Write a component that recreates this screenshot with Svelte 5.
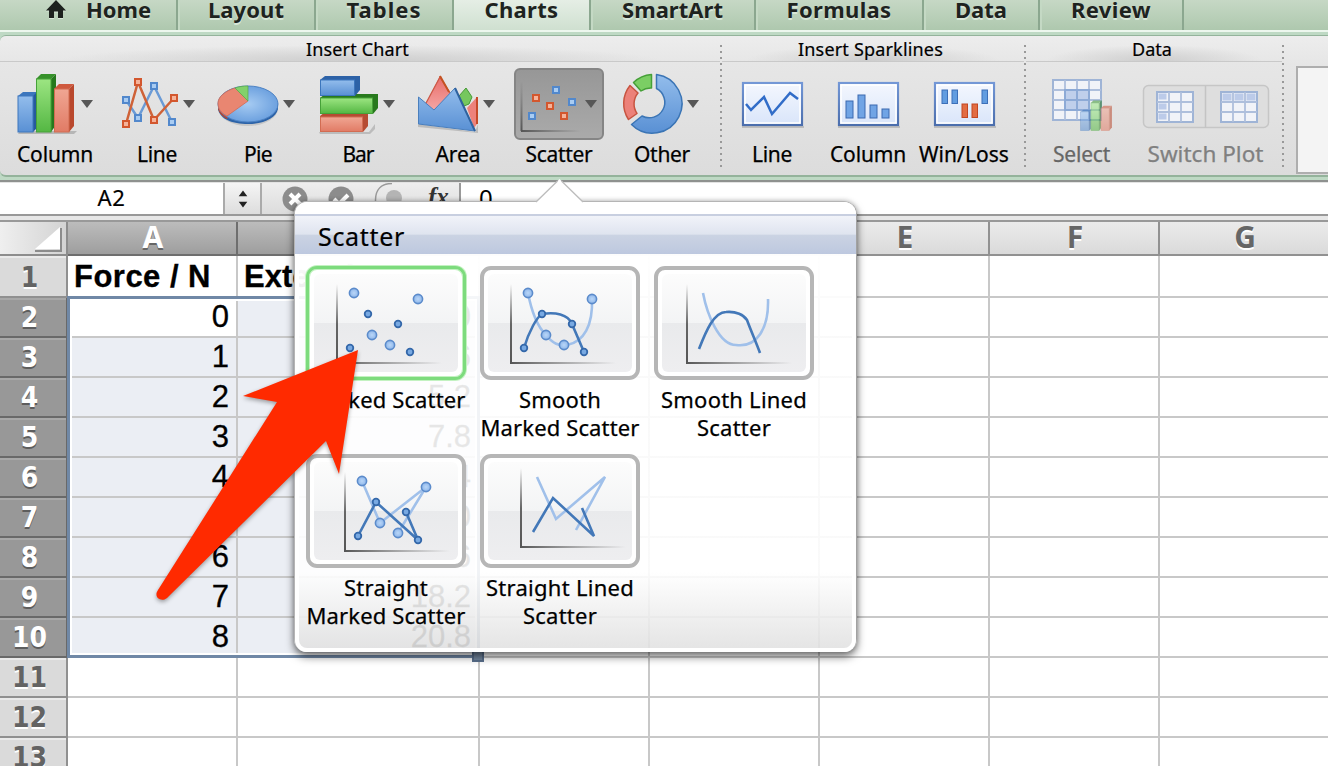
<script>
  function fit(node, width) {
    const natural = node.getBoundingClientRect().width;
    const count = node.textContent.length;
    node.style.letterSpacing = `${(width - natural) / count}px`;
  }

  const tabs = [
    { name: 'Home', w: 178, text: 65, home: true },
    { name: 'Layout', w: 138, text: 76 },
    { name: 'Tables', w: 138, text: 75 },
    { name: 'Charts', w: 137, text: 74, active: true },
    { name: 'SmartArt', w: 165, text: 101 },
    { name: 'Formulas', w: 168, text: 105 },
    { name: 'Data', w: 116, text: 52 },
    { name: 'Review', w: 144, text: 80 }
  ];

  const charts = [
    { name: 'Column', w: 110, text: 76, caret: 87 },
    { name: 'Line', w: 94, text: 40, caret: 79 },
    { name: 'Pie', w: 108, text: 28, caret: 85 },
    { name: 'Bar', w: 92, text: 31, caret: 77 },
    { name: 'Area', w: 108, text: 45, caret: 85 },
    { name: 'Scatter', w: 94, text: 67, caret: 79 },
    { name: 'Other', w: 112, text: 56, caret: 87 }
  ];

  const sparks = [
    { name: 'Line', text: 40 },
    { name: 'Column', text: 76 },
    { name: 'Win/Loss', text: 90 }
  ];

  const columns = [
    { name: 'A', w: 170, on: true },
    { name: 'B', w: 242, on: true },
    { name: 'C', w: 170 },
    { name: 'D', w: 170 },
    { name: 'E', w: 170 },
    { name: 'F', w: 170 },
    { name: 'G', w: 170 }
  ];

  const a = ['Force / N', '0', '1', '2', '3', '4', '5', '6', '7', '8', '', '', ''];
  const b = ['Extension', '0', '2.6', '5.2', '7.8', '10.4', '13.0', '15.6', '18.2', '20.8', '', '', ''];
  const rows = a.map((v, i) => ({ n: i + 1, cells: [v, b[i], '', '', '', '', ''], on: i > 0 && i < 10 }));

  const big = [[48, 27], [112, 33], [66, 69], [84, 79]];
  const small = [[62, 48], [92, 58], [44, 82], [104, 86]];

  const cards = [
    { lines: [['Marked Scatter', 159]], dx: 0, dy: 0, dots: true, on: true },
    { lines: [['Smooth', 82], ['Marked Scatter', 159]], dx: 0, dy: 0, dots: true,
      light: 'M48 27C52 48 58 61 66 69C73 78 79 80 87 79C104 76 113 59 112 33',
      dark: 'M44 82C49 65 57 51 62 48C75 46 88 48 92 58L104 86' },
    { lines: [['Smooth Lined', 146], ['Scatter', 74]], dx: 2, dy: 0, dots: false,
      light: 'M47 27C51 48 63 79 80 79C101 82 113 62 112 33',
      dark: 'M43 83C50 65 58 46 70 46C80 45 88 49 91 54C95 65 100 76 104 87' },
    { lines: [['Straight', 84], ['Marked Scatter', 159]], dx: 8, dy: 0, dots: true,
      light: 'M48 27L66 69L112 33L84 79', dark: 'M44 82L62 48L104 86L92 58' },
    { lines: [['Straight Lined', 148], ['Scatter', 74]], dx: 10, dy: -4, dots: false,
      light: 'M47 27L66 69L115 27L86 80', dark: 'M43 82L63 48L104 86L92 58' }
  ];
</script>

{#snippet dot(x, y, blue)}
  <rect x={x - 3} y={y - 3} width="6" height="6" fill={blue ? '#a9ccf2' : '#f5b39a'} stroke={blue ? '#5288cc' : '#d3572e'} stroke-width="2" />
{/snippet}

{#snippet columnBars()}
  <path d="M18 96l5-4h16l-4 4z" fill="#3c76bd" /><path d="M33 96l4-4v36l-4 4z" fill="#265a9d" />
  <rect x="18" y="96" width="15" height="36" fill="url(#blue)" stroke="#3c76bd" />
  <path d="M36 79l5-5h15l-5 5z" fill="#36912a" /><path d="M51 79l5-5v51l-5 7z" fill="#26781d" />
  <rect x="36.500" y="79" width="14.500" height="53" fill="url(#green)" stroke="#46a139" />
  <path d="M54 89l5-5h15l-5 5z" fill="#cf593e" /><path d="M69 89l5-5v42l-5 6z" fill="#b9482d" />
  <rect x="54.500" y="89" width="14.500" height="43" fill="url(#red)" stroke="#d26c52" />
{/snippet}

{#snippet chartIcon(name)}
  {#if name === 'Column'}
    <svg class="icon" viewBox="0 68 110 72" width="110" height="72">
      <path d="M20 131h57l-3 3H18z" fill="#777" opacity=".4" />
      {@render columnBars()}
    </svg>
  {:else if name === 'Line'}
    <svg class="icon" viewBox="110 68 94 72" width="94" height="72" fill="none">
      <path d="M126 100L138 118L154 86L172 122" stroke="#6b9bd6" stroke-width="2.500" />
      <path d="M126 124L138 82L154 120L174 98" stroke="#cf6238" stroke-width="2.500" />
      {@render dot(126, 100, true)}{@render dot(138, 118, true)}{@render dot(154, 86, true)}{@render dot(172, 122, true)}
      {@render dot(126, 124, false)}{@render dot(138, 82, false)}{@render dot(154, 120, false)}{@render dot(174, 98, false)}
    </svg>
  {:else if name === 'Pie'}
    <svg class="icon" viewBox="204 68 108 72" width="108" height="72">
      <ellipse cx="248" cy="108" rx="30" ry="18" fill="#999" opacity=".35" />
      <path d="M218 103v6c2 10 14 15 30 15s28-6 30-15v-6z" fill="#2c63a8" />
      <path d="M218 103v6c1 4 4 7 9 10l6-8z" fill="#bd452c" />
      <ellipse cx="248" cy="104" rx="30" ry="18" fill="url(#pieblue)" stroke="#4d82c3" />
      <path d="M248 101L227 116C221 113 218 109 218 103C218 97 225 91 235 88z" fill="#e98671" stroke="#d46a53" stroke-width=".8" />
      <path d="M248 101L235 88C239 86.500 243 86 248 86z" fill="#82d16b" stroke="#56a947" stroke-width=".7" />
    </svg>
  {:else if name === 'Bar'}
    <svg class="icon" viewBox="312 68 92 72" width="92" height="72">
      <path d="M319 132h50l6-8v5l-5 5h-50z" fill="#777" opacity=".35" />
      <path d="M320 116l5-4h43v14l-5 6h-43z" fill="#b64b32" /><rect x="320.500" y="117" width="42" height="14.500" fill="url(#red)" stroke="#d26c52" />
      <path d="M320 98l5-4h53v14l-5 6h-53z" fill="#28791d" /><rect x="320.500" y="98" width="52" height="15.500" fill="url(#green)" stroke="#46a139" />
      <path d="M320 80l5-4h35v14l-5 6h-35z" fill="#2d62a7" /><rect x="320.500" y="80" width="34" height="15.500" fill="url(#blue)" stroke="#3c76bd" />
    </svg>
  {:else if name === 'Area'}
    <svg class="icon" viewBox="404 68 108 72" width="108" height="72">
      <path d="M418 124l57 8 3-8v9l-60-6z" fill="#777" opacity=".35" />
      <path d="M459 96L466 88L472 97L469 104L464 106z" fill="#76c75e" stroke="#469a36" />
      <path d="M467 108L477 97V124L474 128z" fill="#ed827b" /><path d="M477 97V124" stroke="#c64a29" stroke-width="2" />
      <path d="M425 105L440 76L451 94L434 112z" fill="url(#pink)" /><path d="M425 105L440 77L450 93" fill="none" stroke="#cc5947" stroke-width="1.300" /><path d="M440 76L449 92" stroke="#c45221" stroke-width="2" />
      <path d="M418.500 97L434 110L455 88L475 131L418.500 124z" fill="url(#blue)" stroke="#4a7fbd" /><path d="M455 88L475 131" stroke="#2f629f" stroke-width="2" />
    </svg>
  {:else if name === 'Scatter'}
    <svg class="icon" viewBox="512 68 94 72" width="94" height="72">
      <path d="M521.500 82V131" stroke="url(#vaxis)" stroke-width="2" /><rect x="521" y="130" width="60" height="2" fill="url(#haxis)" />
      {@render dot(556, 90, true)}{@render dot(572, 102, true)}{@render dot(532, 116, true)}
      {@render dot(536, 98, false)}{@render dot(550, 106, false)}{@render dot(564, 116, false)}
    </svg>
  {:else}
    <svg class="icon" viewBox="606 68 112 72" width="112" height="72" stroke-linejoin="round">
      <path d="M656.500 74.500A29.500 29.500 0 1 1 631.500 124.500L642 116A15.500 15.500 0 1 0 656.500 88.500z" fill="url(#blue)" stroke="#3b75b5" stroke-width="1.500" />
      <path d="M628.500 119.500A29 29 0 0 1 630 85.500L638 93A17 17 0 0 0 637 113.500z" fill="#ec8179" stroke="#c75440" stroke-width="1.500" />
      <path d="M633.500 82.500A29 29 0 0 1 651.500 74.500V88A17 17 0 0 0 641 91z" fill="#7bce64" stroke="#46a038" stroke-width="1.500" />
    </svg>
  {/if}
{/snippet}

{#snippet grid(x, y, w, h, cols, rws)}
  <rect {x} {y} width={w} height={h} fill="#f1f3f8" stroke="#9fb4d6" stroke-width="2" />
  {#each Array(cols - 1) as _, i}
    <path d={`M${x + (w * (i + 1)) / cols} ${y}v${h}`} stroke="#aebfdc" stroke-width="1.800" />
  {/each}
  {#each Array(rws - 1) as _, i}
    <path d={`M${x} ${y + (h * (i + 1)) / rws}h${w}`} stroke="#aebfdc" stroke-width="1.800" />
  {/each}
{/snippet}

<svg class="defs" width="0" height="0">
  <defs>
    <linearGradient id="blue" x2="0" y2="1"><stop stop-color="#93bdec" /><stop offset="1" stop-color="#5990d4" /></linearGradient>
    <linearGradient id="green" x2="0" y2="1"><stop stop-color="#9ce582" /><stop offset="1" stop-color="#54b743" /></linearGradient>
    <linearGradient id="red" x2="0" y2="1"><stop stop-color="#f0a693" /><stop offset="1" stop-color="#e17b65" /></linearGradient>
    <linearGradient id="pink" x2="0" y2="1"><stop stop-color="#e86b68" /><stop offset="1" stop-color="#f6aaa8" /></linearGradient>
    <radialGradient id="pieblue"><stop stop-color="#a6cbf2" /><stop offset="1" stop-color="#6da1df" /></radialGradient>
    <linearGradient id="vaxis" gradientUnits="userSpaceOnUse" x1="0" y1="80" x2="0" y2="131"><stop stop-color="#666" stop-opacity="0" /><stop offset="1" stop-color="#555" /></linearGradient>
    <linearGradient id="haxis"><stop stop-color="#555" /><stop offset="1" stop-color="#666" stop-opacity="0" /></linearGradient>
    <linearGradient id="cardv" x2="0" y2="1"><stop stop-color="#666" stop-opacity="0" /><stop offset=".5" stop-color="#666" /><stop offset="1" stop-color="#555" /></linearGradient>
    <radialGradient id="ball"><stop stop-color="#b9d6f8" /><stop offset="1" stop-color="#8fb7ea" /></radialGradient>
    <linearGradient id="frame" x2="0" y2="1"><stop stop-color="#7397d6" /><stop offset="1" stop-color="#4b6ead" /></linearGradient>
    <linearGradient id="paper" x2="0" y2="1"><stop stop-color="#f4f7fe" /><stop offset="1" stop-color="#d9e5fa" /></linearGradient>
  </defs>
</svg>

<div class="window">
  <nav class="tabs">
    {#each tabs as t}
      <div class="tab" class:active={t.active} class:first={t.home} style:width={`${t.w}px`}>
        {#if t.home}
          <svg width="20" height="20" viewBox="0 0 20 20"><path d="M10 0L0 10.500H3V18H8V11.500H12V18H17V10.500H20z" fill="#1d211e" /></svg>
        {/if}
        <span use:fit={t.text}>{t.name}</span>
      </div>
    {/each}
  </nav>

  <div class="ribbon">
    <div class="panel">
      <section class="group" style:width="720px">
        <h2 class="charts-title"><span use:fit={103}>Insert Chart</span></h2>
        <div class="buttons">
          {#each charts as c}
            <div class="button" class:pressed={c.name === 'Scatter'} style:width={`${c.w}px`}>
              <div class="art">
                {@render chartIcon(c.name)}
                <i class="caret" style:left={`${c.caret - 6}px`}></i>
              </div>
              <span use:fit={c.text}>{c.name}</span>
            </div>
          {/each}
        </div>
      </section>
      <i class="dots"></i>
      <section class="group sparks" style:width="302px">
        <h2 class="spark-title"><span use:fit={145}>Insert Sparklines</span></h2>
        <div class="buttons">
          {#each sparks as s, i}
            <div class="button" style:width="96px">
              <svg class="icon" width="96" height="72" viewBox="0 0 96 72">
                <rect x="18" y="58" width="62" height="2" fill="#999" opacity=".5" />
                <rect x="19" y="15" width="59" height="42" fill="url(#paper)" stroke="url(#frame)" stroke-width="2.200" />
                <rect x="21" y="17" width="55" height="38" fill="none" stroke="#fff" stroke-width="1.500" />
                {#if i === 0}
                  <path d="M22 36L27 42L40 29L48 46L66 25L74 31" fill="none" stroke="#326dc8" stroke-width="2.500" />
                {:else if i === 1}
                  {#each [[26, 33, 17], [38, 27, 23], [50, 37, 13], [62, 41, 9]] as [x, y, h]}
                    <rect {x} {y} width="7" height={h} fill="#70a4e5" stroke="#3b69af" />
                  {/each}
                {:else}
                  {#each [[26, 22], [36, 22], [66, 22]] as [x, y]}<rect {x} {y} width="5.500" height="13.500" fill="#619ce0" stroke="#3c6fb8" />{/each}
                  {#each [[46, 36], [56, 36]] as [x, y]}<rect {x} {y} width="5.500" height="13.500" fill="#e26c43" stroke="#c24622" />{/each}
                {/if}
              </svg>
              <span use:fit={s.text}>{s.name}</span>
            </div>
          {/each}
        </div>
      </section>
      <i class="dots"></i>
      <section class="group" style:width="256px">
        <h2 class="data-title"><span use:fit={40}>Data</span></h2>
        <div class="buttons dim">
          <div class="button" style:width="109px">
            <svg class="icon" viewBox="1027 68 109 72" width="109" height="72">
              {@render grid(1053, 80, 48, 40, 4, 4)}
              <path d="M1065 90h24v20h-24zM1077 90v20M1065 100h24" fill="#bfcfeb" stroke="#8daad6" stroke-width="2" />
              <g transform="translate(1070.500 62) scale(.56 .52)" opacity=".55">{@render columnBars()}</g>
            </svg>
            <span use:fit={57}>Select</span>
          </div>
          <div class="button switch" style:width="139px">
            <svg class="icon" viewBox="1136 68 139 72" width="139" height="72">
              <rect x="1143.500" y="85.500" width="125" height="42" rx="5" fill="#dedede" stroke="#c6c6c6" stroke-width="1.500" />
              <path d="M1205.500 86v42" stroke="#c4c4c4" stroke-width="1.500" />
              {@render grid(1157, 92, 36, 30, 3, 3)}
              <path d="M1158.500 93.500h8v6h-8zM1158.500 103.500h8v6h-8zM1158.500 113.500h8v6h-8z" fill="#bccbe9" />
              {@render grid(1221, 92, 36, 30, 3, 3)}
              <path d="M1222.500 93.500h9v7h-9zM1234.500 93.500h9v7h-9zM1246.500 93.500h9v7h-9z" fill="#bccbe9" />
            </svg>
            <span use:fit={116}>Switch Plot</span>
          </div>
        </div>
      </section>
      <i class="dots"></i>
      <div class="gallery"></div>
    </div>
  </div>

  <div class="formula">
    <div class="name-box"><span use:fit={28}>A2</span></div>
    <div class="stepper">
      <svg width="10" height="20" viewBox="0 0 14 24"><path d="M7 0l6 8H1zM7 24l6-8H1z" fill="#222" /></svg>
    </div>
    <div class="tools">
      <svg width="196" height="31" viewBox="262 183 196 31">
        <circle cx="295" cy="199" r="12.500" fill="#8c8c8c" /><path d="M290 194l10 10M300 194l-10 10" stroke="#fff" stroke-width="4" />
        <circle cx="341" cy="199" r="12.500" fill="#8c8c8c" /><path d="M334 199l5 5 9-9" stroke="#fff" stroke-width="4" fill="none" />
        <path d="M392 183.500C381 183.500 375.500 190 375.500 200V214" fill="none" stroke="#999" stroke-width="1.500" />
        <circle cx="394" cy="198" r="8" fill="#b4b4b4" />
      </svg>
      <em>fx</em>
    </div>
    <div class="value">0</div>
  </div>

  <main class="sheet">
    <div class="heads">
      <div class="corner"><svg width="30" height="26" viewBox="0 0 30 26"><path d="M28 2V25H2" fill="none" stroke="#8c8c8c" stroke-width="2" /><path d="M27 1V23H2z" fill="#fff" /></svg></div>
      {#each columns as c}
        <div class="head" class:on={c.on} style:width={`${c.w}px`}>{c.name}</div>
      {/each}
    </div>
    {#each rows as r}
      <div class="row" class:title={r.n === 1} class:on={r.on}>
        <div class="num">{r.n}</div>
        {#each r.cells as v, i}
          <div class="cell" class:picked={r.on && i < 2 && !(r.n === 2 && i === 0)} style:width={`${columns[i].w}px`}>
            {#if r.n === 1 && i === 0}<span use:fit={137}>{v}</span>{:else}{v}{/if}
          </div>
        {/each}
      </div>
    {/each}
    <div class="selection"><i></i></div>
  </main>

  <aside class="popover">
    <svg class="pointer" width="50" height="25" viewBox="0 0 50 25"><path d="M1 23L24.500 0L48 23V25H1z" fill="#fff" /><path d="M1 23L22.500 2M26.500 2L48 23" stroke="#bcbcbc" stroke-width="1.300" fill="none" /></svg>
    <header><span use:fit={87}>Scatter</span></header>
    <div class="cards">
      {#each cards as c}
        <figure>
          <div class="card" class:on={c.on}>
            <svg width="144" height="98" viewBox="8 8 144 98" fill="none">
              <g transform={`translate(${c.dx} ${c.dy})`}>
                <rect x="30" y="18" width="2" height="80" fill="url(#cardv)" />
                <rect x="30" y="96" width="106" height="2" fill="url(#haxis)" />
                {#if c.light}
                  <path d={c.light} stroke="#a0c0ea" stroke-width="2.600" />
                  <path d={c.dark} stroke="#4378b8" stroke-width="2.600" />
                {/if}
                {#if c.dots}
                  {#each big as [x, y]}<circle cx={x} cy={y} r="4.600" fill="url(#ball)" stroke="#5b8bcb" stroke-width="1.600" />{/each}
                  {#each small as [x, y]}<circle cx={x} cy={y} r="3.300" fill="#78a9e2" stroke="#3468aa" stroke-width="1.800" />{/each}
                {/if}
              </g>
            </svg>
          </div>
          <figcaption>
            {#each c.lines as [text, w]}<div><span use:fit={w}>{text}</span></div>{/each}
          </figcaption>
        </figure>
      {/each}
    </div>
  </aside>

  <svg class="arrow" width="140" height="270" viewBox="235 340 140 270">
    <path d="M358 350L339 474L326 441L167 598C161 603 153 597 158 590L277 402L243 396z" fill="#ff2a00" />
  </svg>
</div>

<style>
  :global(body) { margin: 0; overflow: hidden; }
  .window { position: relative; width: 1328px; height: 766px; overflow: hidden; background: #fff; font-family: 'Noto Sans', 'Open Sans', sans-serif; color: #000; }
  .window * { box-sizing: border-box; }
  .defs { position: absolute; }
  span { display: inline-block; white-space: nowrap; }
  i { display: block; }

  .tabs { display: flex; height: 30px; background: linear-gradient(#c6d8c5, #aec8ae); }
  .tab { display: flex; justify-content: center; height: 30px; border-right: 2px solid #8ba78f; box-shadow: inset 2px 0 #c4d9c4; font-size: 22px; font-weight: 700; line-height: 30px; color: #1e231f; text-shadow: 0 2px #d8e7d8; }
  .tab span { margin: -6px 0 0 0; }
  .tab.first { justify-content: flex-start; padding-left: 46px; gap: 20px; box-shadow: none; }
  .tab.first svg { filter: drop-shadow(0 1px #d8e7d8); }
  .tab.active { background: linear-gradient(#e5eee5, #cfe0d0); box-shadow: none; }

  .ribbon { height: 153px; padding-top: 5px; background: linear-gradient(#edf7ee 0 2px, #bed9c4 2px 150px, #8e918f 150px 152px, #e3e3e3 152px); }
  .panel { display: flex; width: 1334px; height: 142px; overflow: hidden; border: 1px solid #94b39b; border-width: 1px 0 2px; border-radius: 6px; background: linear-gradient(#ededed, #e6e6e6 20%, #dcdcdc); }
  .panel > * { flex: none; }
  .group { height: 138px; }
  h2 { position: relative; height: 26px; margin: 0; font-size: 18px; line-height: 26px; font-weight: 400; text-align: center; background: radial-gradient(ellipse 42% 16px at 50% 100%, #cdcdcd, transparent); border-bottom: 1px solid #c9c9c9; -webkit-text-stroke: .2px; }
  h2.charts-title { padding-right: 5px; }
  h2.spark-title { padding-right: 5px; }
  h2.data-title { padding-right: 4px; }
  .buttons { display: flex; height: 112px; padding-top: 6px; }
  .sparks .buttons { padding-left: 2px; }
  .button { display: flex; flex: none; flex-direction: column; align-items: center; font-size: 21px; line-height: 28px; -webkit-text-stroke: .25px; }
  .icon { display: block; flex: none; }
  .art { position: relative; width: 100%; height: 72px; flex: none; }
  .pressed .art { width: 90px; border: 2px solid #858585; border-radius: 6px; background: linear-gradient(#979797, #aaa); }
  .pressed .art .icon { margin: -2px 0 0 -4px; }
  .pressed .caret { margin: -2px 0 0 -4px; }
  .caret { position: absolute; top: 32px; border: 6px solid transparent; border-top: 8px solid #575757; border-bottom: 0; }
  .dim { padding-left: 1px; color: #666; }
  .dim .switch { color: #808080; font-size: 22.500px; }
  .dots { width: 2px; height: 126px; margin-top: 9px; background: repeating-linear-gradient(#999 0 2px, transparent 2px 6px); }
  .gallery { width: 60px; height: 108px; margin: 30px 0 0 12px; background: #f4f4f4; border: 2px solid #aeaeae; }

  .formula { display: flex; height: 39px; border-bottom: 2px solid #999; background: linear-gradient(transparent 31px, #999 31px 33px, #e7e7e7 33px); }
  .formula > div { height: 31px; }
  .name-box { width: 223px; text-align: center; font-size: 22px; line-height: 28px; background: #fff; -webkit-text-stroke: .2px; }
  .stepper { display: flex; justify-content: center; align-items: center; width: 39px; background: linear-gradient(#f5f5f5, #ddd); border: solid #aaa; border-width: 0 2px; }
  .tools { display: flex; width: 199px; border-right: 2px solid #999; background: linear-gradient(#eee, #dcdcdc); }
  .tools em { margin-left: -30px; font: italic 700 25px/27px 'Liberation Serif', serif; color: #333; }
  .value { flex: 1; padding-left: 18px; font-size: 24px; line-height: 29px; background: #fff; }

  .sheet { position: relative; width: 1340px; }
  .heads { display: flex; height: 34px; }
  .corner { display: flex; justify-content: flex-end; padding: 4px 3px 0 0; width: 68px; border: solid #8d8d8d; border-width: 0 2px 2px 0; background: linear-gradient(90deg, #efefef, #d3d3d3); }
  .head { flex: none; padding-left: 2px; border: solid #919191; border-width: 0 2px 2px 0; background: linear-gradient(#ebebeb, #dadada); color: #666; font-size: 30px; line-height: 29px; font-weight: 700; text-align: center; text-shadow: 0 2px #fff; }
  .head.on { color: #fff; background: linear-gradient(#bcbcbc, #9e9e9e); border-color: #6e6e6e; text-shadow: 0 2px #666; }
  .row { display: flex; height: 40px; }
  .row.title { height: 42px; font-weight: 700; }
  .num { flex: none; width: 68px; padding-right: 7px; border: solid #909090; border-width: 0 2px 2px 0; background: #dadada; box-shadow: inset 0 2px #eaeaea; color: #636363; font: 700 28px/39px 'DejaVu Sans Condensed', 'DejaVu Sans', sans-serif; font-stretch: condensed; text-align: center; text-shadow: 0 2px #fff; }
  .title .num { line-height: 43px; }
  .on .num { background: #989898; border-color: #696969; box-shadow: inset 0 2px #a8a8a8; color: #fff; text-shadow: 0 2px #5d5d5d; }
  .cell { flex: none; padding: 0 7px 0 6px; border: solid #c8c8c8; border-width: 0 2px 2px 0; font: 31px/38px 'Liberation Sans', sans-serif; text-align: right; -webkit-text-stroke: .3px; }
  .title .cell { font-weight: 700; line-height: 41px; text-align: left; }
  .picked { background: #ebeef4; }
  .selection { position: absolute; left: 67px; top: 74px; width: 413px; height: 362px; border: 3px solid #7088a6; box-shadow: inset 0 0 0 2px #fff; }
  .selection i { position: absolute; right: -7px; bottom: -7px; width: 12px; height: 12px; background: #7488a0; border: 2px solid #596f8c; }

  .popover { position: absolute; left: 294px; top: 201px; width: 563px; height: 451px; border: 1px solid #b5b5b5; border-right-color: #a2a2a2; border-bottom: 0; border-radius: 13px; padding-top: 12px; background: linear-gradient(rgba(255,255,255,.98) 62px, rgba(255,255,255,.9) 110px 370px, rgba(226,226,226,.9) 446px, #fff 447px); box-shadow: 0 5px 9px rgba(0,0,0,.5), 0 0 5px rgba(0,0,0,.25); }
  .popover::before { content: ''; position: absolute; inset: 0 0 auto; height: 13px; background: #fff; border-radius: 12px 12px 0 0; }
  .popover::after { content: ''; position: absolute; inset: 52px 0 0; border: solid #fff; border-width: 0 4px 4px; border-radius: 0 0 12px 12px; pointer-events: none; }
  .pointer { position: absolute; left: 240px; top: -23px; }
  header { position: relative; height: 40px; padding-left: 23px; border-top: 2px solid #c8cfe0; background: linear-gradient(#f1f3f9, #dfe4ef 48%, #cbd3e3 50%, #bdc8df); font-size: 25px; line-height: 40px; -webkit-text-stroke: .2px; }
  .cards { display: grid; grid-template-columns: repeat(3, 160px); grid-auto-rows: 188px; column-gap: 14px; padding: 12px 0 0 11px; }
  figure { margin: 0; }
  .card { width: 160px; height: 114px; padding: 4px; border: 4px solid #b6b6b6; border-radius: 11px; background: #fff; }
  .card.on { padding: 5px; border: 3px solid #7ddb7d; box-shadow: 0 0 0 1px #c3f2c1, inset 0 0 0 1px #c3f2c1; }
  .card svg { display: block; border-radius: 6px; background: linear-gradient(#fcfcfc, #f3f4f5 50%, #e9eaec 50%, #eeeef0); }
  figcaption { padding-top: 5px; font-size: 22px; line-height: 28px; text-align: center; -webkit-text-stroke: .25px; }
  figcaption div { display: flex; justify-content: center; }
  .arrow { position: absolute; left: 235px; top: 340px; overflow: visible; filter: drop-shadow(0 2px 2px rgba(0,0,0,.35)); }
</style>
